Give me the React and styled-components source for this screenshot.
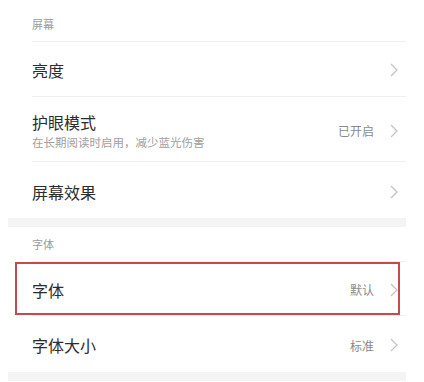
import React from 'react'
import styled, { createGlobalStyle } from 'styled-components'

const GlobalStyle = createGlobalStyle`
  html, body {
    margin: 0;
    padding: 0;
    background: #fff;
  }
  body {
    font-family: "Noto Sans CJK SC", "Noto Sans", sans-serif;
  }
`

const Page = styled.div`
  width: 398px;
  margin-left: 8px;
  background: #fff;
`

const Header = styled.div`
  padding-left: 24px;

  .inner {
    height: ${(p) => p.height}px;
    box-sizing: border-box;
    padding-top: ${(p) => p.top}px;
    border-bottom: 1px solid #efefef;
    font-size: 11px;
    line-height: 16px;
    color: #9a9a9a;
  }
`

const Row = styled.div`
  position: relative;
  padding-left: 24px;

  ${(p) =>
    p.highlighted &&
    `
    &::after {
      content: '';
      position: absolute;
      left: 7px;
      right: 6px;
      top: 0;
      bottom: 1px;
      border: 2px solid #c44a50;
      pointer-events: none;
    }
  `}
`

const RowBody = styled.div`
  height: ${(p) => p.height}px;
  box-sizing: border-box;
  padding-top: ${(p) => p.top || 0}px;
  padding-right: 8px;
  display: flex;
  align-items: center;
  border-bottom: ${(p) => (p.last ? 'none' : '1px solid #efefef')};
`

const Texts = styled.div`
  flex: 1;
  display: flex;
  flex-direction: column;
  gap: 2px;
`

const Title = styled.span`
  font-size: 16px;
  line-height: 20px;
  color: #2c2c2c;
`

const Sub = styled.span`
  font-size: 11.5px;
  line-height: 16px;
  color: #a0a0a0;
`

const Value = styled.span`
  font-size: 12px;
  color: #8a8a8a;
  margin-right: 16px;
`

const Gap = styled.div`
  height: 9px;
  background: #f4f4f4;
`

const Chevron = () => (
  <svg width="8" height="14" viewBox="0 0 8 14">
    <path d="M1 1 L7 7 L1 13" fill="none" stroke="#c4c4c4" strokeWidth="1.3" />
  </svg>
)

const Item = ({ title, sub, value, height, top, last, highlighted }) => (
  <Row highlighted={highlighted}>
    <RowBody height={height} top={top} last={last}>
      <Texts>
        <Title>{title}</Title>
        {sub && <Sub>{sub}</Sub>}
      </Texts>
      {value && <Value>{value}</Value>}
      <Chevron />
    </RowBody>
  </Row>
)

export default function App() {
  return (
    <>
      <GlobalStyle />
      <Page>
        <Header height={42} top={16}>
          <div className="inner">屏幕</div>
        </Header>
        <Item title="亮度" height={55} top={2} />
        <Item
          title="护眼模式"
          sub="在长期阅读时启用，减少蓝光伤害"
          value="已开启"
          height={65}
          top={3}
        />
        <Item title="屏幕效果" height={56} top={4} last />
        <Gap />
        <Header height={35} top={9}>
          <div className="inner">字体</div>
        </Header>
        <Item title="字体" value="默认" height={54} top={2} highlighted />
        <Item title="字体大小" value="标准" height={56} top={2} last />
        <Gap />
      </Page>
    </>
  )
}
